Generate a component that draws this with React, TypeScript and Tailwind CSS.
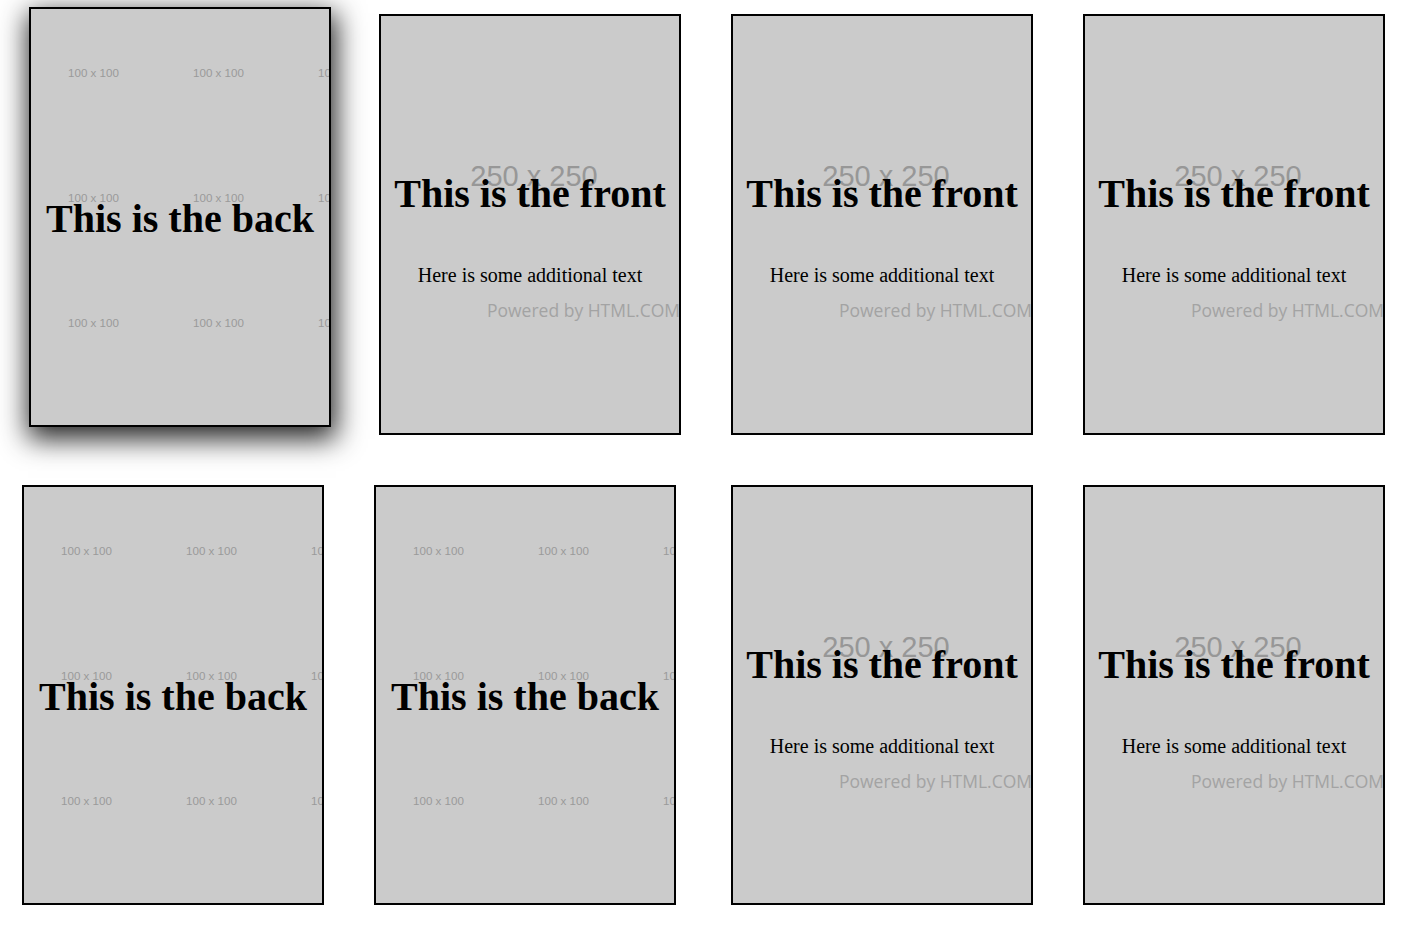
import React from 'react';

type CardSide = 'front' | 'back';

type CardSpec = {
  side: CardSide;
  className: string;
};

const cards: CardSpec[] = [
  {
    side: 'back',
    className:
      'h-[420px] translate-x-[2px] -translate-y-[7px] shadow-[2px_9px_26px_3px_rgba(0,0,0,0.85)] z-10',
  },
  { side: 'front', className: 'h-[421px]' },
  { side: 'front', className: 'h-[421px]' },
  { side: 'front', className: 'h-[421px]' },
  { side: 'back', className: 'h-[420px] -translate-x-[5px]' },
  { side: 'back', className: 'h-[420px] -translate-x-[5px]' },
  { side: 'front', className: 'h-[420px]' },
  { side: 'front', className: 'h-[420px]' },
];

const tiles = Array.from({ length: 12 }, (_, i) => i);

function BackFace() {
  return (
    <>
      <div className="absolute inset-0 grid grid-cols-[repeat(3,125px)] auto-rows-[125px] pt-[1px]">
        {tiles.map((tile) => (
          <div
            key={tile}
            className="flex items-center justify-center font-[family-name:'Liberation_Sans',Arial,sans-serif] text-[11.6px] text-[#9a9a9a]"
          >
            100 x 100
          </div>
        ))}
      </div>
      <div className="relative flex h-full items-center justify-center pt-[4px]">
        <h2 className="font-[family-name:'Liberation_Serif','Times_New_Roman',serif] text-[40px] font-bold leading-[46px] text-black">
          This is the back
        </h2>
      </div>
    </>
  );
}

function FrontFace() {
  return (
    <>
      <div className="absolute left-[28px] top-[146px] w-[250px] text-center font-[family-name:'Liberation_Sans',Arial,sans-serif] text-[29px] leading-none text-[#979797]">
        250 x 250
      </div>
      <div className="absolute left-[106px] top-[286px] whitespace-nowrap font-[family-name:'Open_Sans','Noto_Sans',sans-serif] text-[17.5px] leading-none text-[#a3a3a3]">
        Powered by HTML.COM
      </div>
      <div className="relative flex flex-col items-center pt-[155px] font-[family-name:'Liberation_Serif','Times_New_Roman',serif] text-black">
        <h2 className="text-[40px] font-bold leading-[46px]">This is the front</h2>
        <p className="mt-[47px] text-[20px] leading-[23px]">Here is some additional text</p>
      </div>
    </>
  );
}

export default function App() {
  return (
    <div className="min-h-screen bg-white pl-[27px] pt-[14px]">
      <div className="grid grid-cols-[repeat(4,302px)] gap-x-[50px] gap-y-[50px]">
        {cards.map((card, i) => (
          <div
            key={i}
            className={`relative w-[302px] overflow-hidden border-2 border-black bg-[#cbcbcb] ${card.className}`}
          >
            {card.side === 'back' ? <BackFace /> : <FrontFace />}
          </div>
        ))}
      </div>
    </div>
  );
}
